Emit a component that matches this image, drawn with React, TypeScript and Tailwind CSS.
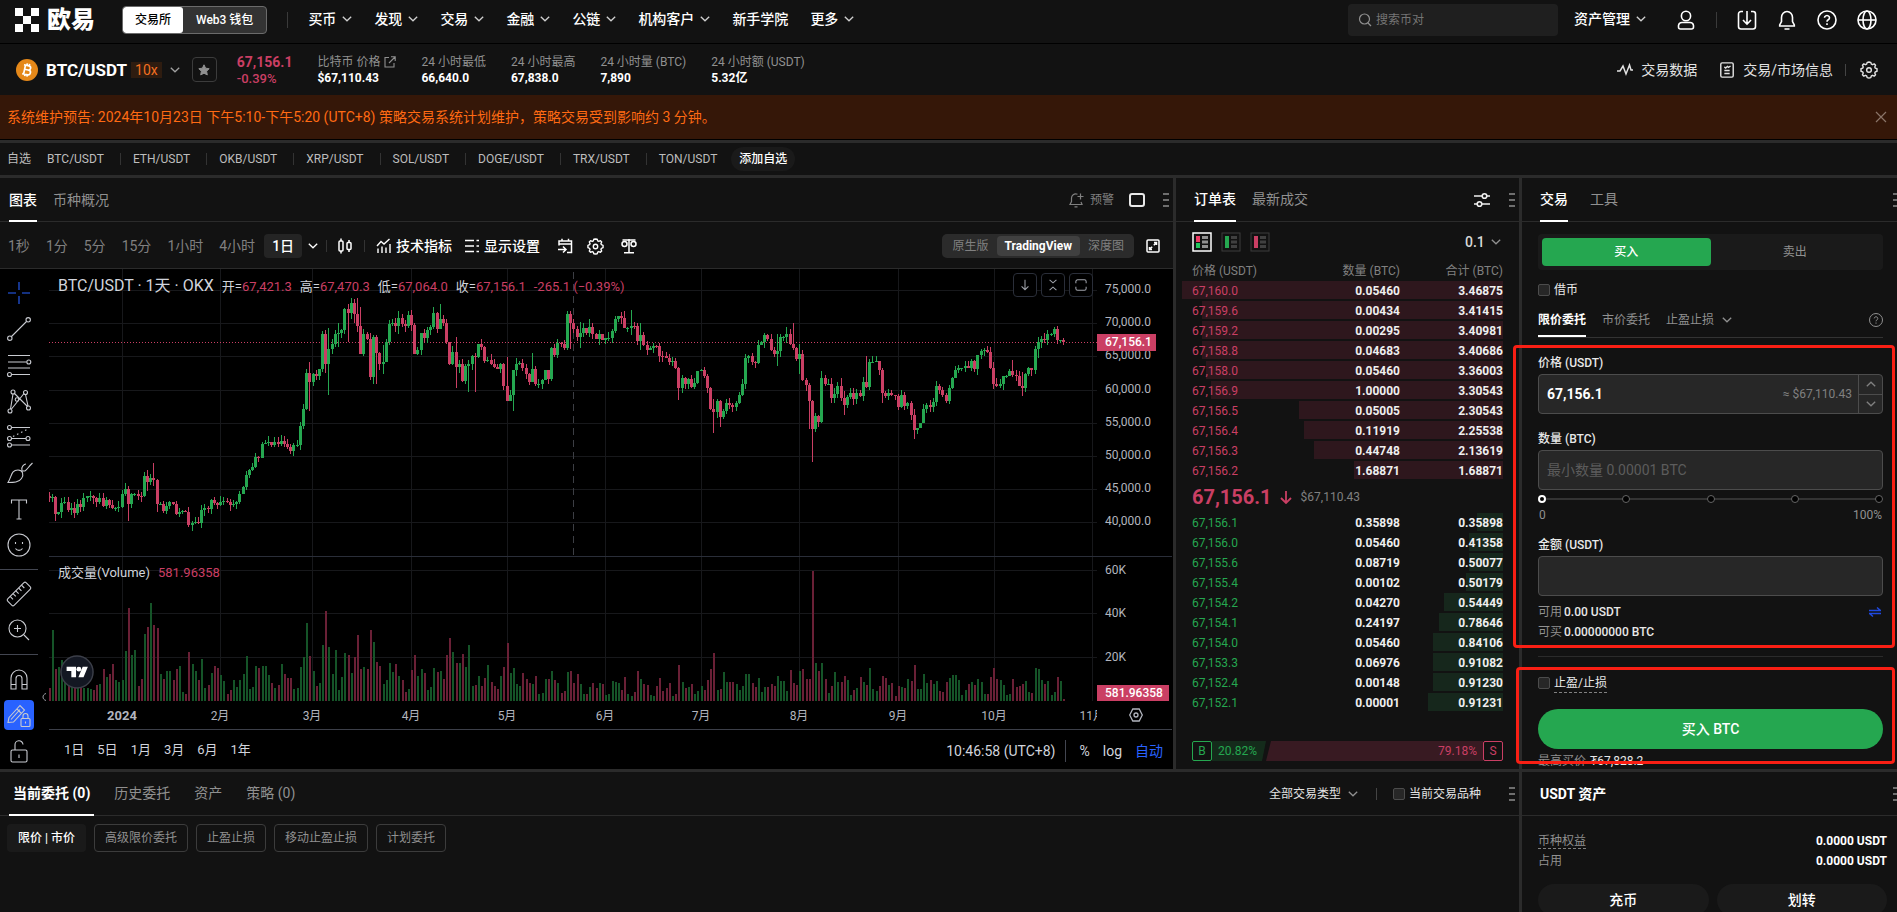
import React from "react";

type Tone = "up" | "down";

const GREEN = "#25a750";
const RED = "#ca3f64";

/* ---------- data ---------- */

const NAV = [
  { label: "买币", menu: true },
  { label: "发现", menu: true },
  { label: "交易", menu: true },
  { label: "金融", menu: true },
  { label: "公链", menu: true },
  { label: "机构客户", menu: true },
  { label: "新手学院", menu: false },
  { label: "更多", menu: true },
];

const FAVORITES = ["BTC/USDT", "ETH/USDT", "OKB/USDT", "XRP/USDT", "SOL/USDT", "DOGE/USDT", "TRX/USDT", "TON/USDT"];

const ASKS: [string, string, string, number][] = [
  ["67,160.0", "0.05460", "3.46875", 321],
  ["67,159.6", "0.00434", "3.41415", 301],
  ["67,159.2", "0.00295", "3.40981", 301],
  ["67,158.8", "0.04683", "3.40686", 301],
  ["67,158.0", "0.05460", "3.36003", 297],
  ["67,156.9", "1.00000", "3.30543", 292],
  ["67,156.5", "0.05005", "2.30543", 204],
  ["67,156.4", "0.11919", "2.25538", 199],
  ["67,156.3", "0.44748", "2.13619", 189],
  ["67,156.2", "1.68871", "1.68871", 149],
];

const BIDS: [string, string, string, number][] = [
  ["67,156.1", "0.35898", "0.35898", 26],
  ["67,156.0", "0.05460", "0.41358", 34],
  ["67,155.6", "0.08719", "0.50077", 34],
  ["67,155.4", "0.00102", "0.50179", 37],
  ["67,154.2", "0.04270", "0.54449", 59],
  ["67,154.1", "0.24197", "0.78646", 64],
  ["67,154.0", "0.05460", "0.84106", 70],
  ["67,153.3", "0.06976", "0.91082", 70],
  ["67,152.4", "0.00148", "0.91230", 70],
  ["67,152.1", "0.00001", "0.91231", 75],
];

/* daily closes in thousands of USDT, from 9 December 2023 to 23 October 2024 */
const CLOSES = [
  43.7, 43.8, 41.2, 41.5, 42.9, 43.0, 41.9, 42.2, 41.4, 42.7, 42.3, 43.7, 43.9, 44.0, 43.7, 43.0, 43.6, 42.5, 43.4, 42.6, 42.1, 42.2, 42.3,
  44.2, 45.0, 42.8, 44.2, 44.2, 44.0, 43.9, 47.0, 46.1, 46.6, 46.3, 42.8, 42.8, 41.7, 42.5, 43.1, 42.8, 41.3, 41.6, 41.7, 41.6, 39.6, 39.9, 40.1, 39.9, 41.8, 42.1, 42.0, 43.3, 42.9, 42.6,
  43.1, 43.2, 43.0, 42.6, 42.7, 43.1, 44.3, 45.3, 47.1, 47.8, 48.3, 49.9, 49.7, 51.8, 51.9, 52.1, 51.7, 52.1, 51.8, 52.3, 51.8, 51.3, 50.7, 51.6, 51.7, 54.5, 57.0, 62.5, 61.2,
  62.4, 62.0, 63.1, 68.3, 63.8, 66.1, 66.9, 68.3, 68.5, 69.0, 72.1, 71.5, 73.1, 71.4, 69.5, 65.3, 68.4, 67.6, 61.9, 67.9, 65.5, 63.8, 64.1, 67.2, 69.9, 70.0, 69.5, 70.8, 69.9, 69.6, 71.3,
  69.7, 65.4, 66.0, 68.5, 67.8, 68.9, 69.4, 71.6, 69.1, 70.6, 70.0, 67.1, 63.9, 65.7, 63.4, 63.8, 61.3, 63.5, 63.8, 65.0, 64.9, 66.8, 66.4, 64.3, 64.5, 63.8, 63.4, 63.1, 63.8, 60.6,
  58.3, 59.1, 62.9, 63.9, 64.0, 63.2, 62.3, 61.2, 63.1, 60.8, 60.8, 61.5, 62.9, 61.6, 66.2, 65.2, 67.0, 66.9, 66.3, 71.4, 70.1, 69.1, 67.9, 68.5, 69.3, 68.5, 69.4, 68.3, 67.6, 68.3, 67.5,
  67.7, 67.8, 68.8, 70.6, 71.1, 70.8, 69.3, 69.3, 69.6, 69.5, 67.3, 68.2, 66.7, 66.0, 66.2, 66.6, 66.5, 65.1, 65.0, 64.8, 64.1, 64.3, 63.2, 60.3, 61.8, 60.8, 61.6, 60.4, 61.0, 62.8,
  62.9, 62.1, 60.2, 57.0, 56.6, 58.3, 55.9, 56.7, 58.0, 57.7, 57.3, 57.9, 59.2, 60.8, 64.7, 65.1, 64.1, 64.0, 66.7, 67.1, 68.2, 67.6, 65.9, 65.4, 65.8, 67.9, 67.9, 68.3, 66.8, 66.2, 64.6,
  65.3, 61.5, 60.7, 58.2, 54.0, 56.0, 55.1, 61.7, 60.9, 60.9, 58.7, 59.3, 60.6, 58.7, 57.6, 58.9, 59.5, 58.5, 59.5, 59.0, 61.2, 60.4, 64.1, 64.2, 64.3, 62.9, 59.5, 59.0, 59.4, 59.1, 59.0,
  57.3, 59.1, 57.5, 58.0, 56.2, 53.9, 54.2, 54.9, 57.0, 57.6, 57.3, 58.1, 60.5, 60.0, 59.2, 58.2, 60.3, 61.8, 62.9, 63.2, 63.3, 63.6, 63.3, 64.3, 63.1, 65.2, 65.8, 65.9, 65.6, 63.3,
  60.8, 60.6, 60.8, 62.1, 62.1, 62.8, 62.2, 62.1, 60.6, 60.3, 62.4, 63.2, 62.9, 66.1, 67.1, 67.6, 67.4, 68.4, 68.4, 69.1, 67.4, 67.4, 67.156,
];

/* wicks that reach far outside the candle body: day index -> [low, high] */
const WICKS: Record<number, [number, number]> = {
  2: [40.2, 43.9], 8: [40.6, 43.0], 24: [44.0, 45.9], 25: [40.2, 45.5], 31: [44.7, 47.9], 33: [45.5, 48.9], 34: [41.5, 46.5], 45: [38.6, 40.2],
  82: [56.7, 64.1], 87: [62.5, 69.0], 88: [59.1, 69.2], 91: [66.4, 70.1], 94: [67.2, 72.9], 96: [70.0, 73.6], 97: [68.6, 73.8], 98: [65.6, 72.4],
  102: [60.8, 68.2], 103: [60.9, 68.2], 105: [62.3, 66.7], 110: [68.3, 71.8], 123: [69.2, 72.9], 128: [60.2, 67.9], 132: [59.7, 64.5], 134: [59.7, 65.5],
  144: [60.0, 64.9], 146: [56.7, 59.5], 152: [61.6, 65.5], 164: [66.1, 71.9], 167: [66.3, 70.2], 170: [67.9, 70.7], 181: [69.2, 71.9],
  183: [68.2, 72.0], 186: [66.0, 70.0], 198: [58.4, 63.4], 209: [53.4, 58.6], 211: [54.4, 58.4], 229: [63.6, 68.4], 232: [67.0, 69.4],
  234: [66.0, 70.0], 236: [62.4, 66.8], 239: [54.0, 61.0], 240: [49.0, 58.4], 243: [54.9, 62.8], 246: [58.0, 61.8], 249: [58.2, 61.8],
  250: [56.2, 59.8], 257: [60.2, 65.0], 259: [64.0, 65.1], 262: [58.0, 63.2], 272: [52.6, 57.0], 297: [60.1, 64.2], 300: [59.9, 61.3],
  303: [61.9, 64.4], 306: [59.0, 62.6], 310: [62.4, 66.6], 311: [64.8, 67.9], 317: [66.9, 69.5],
};

/* daily volume, bar heights in tenths of a thousand BTC */
const VOLUMES = [
  58, 326, 147, 155, 188, 150, 90, 80, 75, 70, 64, 60, 58, 55, 50, 73, 78, 147, 110, 124, 170, 96, 87, 96, 230, 427, 211, 234, 69, 101, 307, 340, 450, 349, 335, 124, 101, 138, 138, 96, 147, 160, 41, 32,
  225, 170, 138, 96, 193, 60, 73, 128, 160, 151, 119, 92, 32, 50, 96, 64, 96, 124, 206, 55, 64, 160, 151, 160, 160, 119, 83, 60, 73, 170, 124, 105, 105, 55, 60, 156, 202, 358, 206, 138, 69, 83, 257,
  413, 248, 124, 234, 50, 110, 220, 211, 128, 202, 303, 147, 156, 147, 326, 271, 179, 160, 78, 96, 174, 133, 170, 115, 96, 41, 55, 142, 211, 115, 147, 128, 50, 64, 151, 133, 138, 101, 211, 289, 225,
  174, 174, 216, 156, 257, 69, 73, 115, 69, 105, 165, 87, 69, 55, 115, 156, 266, 128, 151, 78, 69, 128, 101, 83, 78, 115, 32, 37, 101, 101, 138, 96, 83, 37, 46, 133, 138, 83, 124, 78, 32, 32, 64, 83,
  60, 83, 78, 28, 32, 92, 87, 83, 50, 110, 32, 23, 41, 138, 101, 78, 73, 28, 23, 69, 105, 46, 60, 83, 23, 32, 165, 87, 60, 64, 78, 32, 46, 69, 50, 96, 147, 220, 50, 55, 133, 87, 87, 87, 78, 50, 69,
  124, 124, 83, 64, 105, 41, 64, 64, 78, 69, 115, 92, 92, 46, 142, 83, 73, 138, 147, 101, 101, 596, 174, 138, 174, 101, 37, 69, 133, 87, 87, 115, 96, 28, 50, 60, 110, 87, 73, 151, 55, 46, 69, 115,
  105, 73, 83, 23, 69, 64, 60, 101, 92, 165, 55, 55, 124, 83, 96, 78, 92, 46, 41, 87, 105, 119, 119, 96, 28, 50, 78, 87, 73, 101, 87, 32, 32, 110, 151, 101, 96, 73, 28, 32, 101, 64, 69, 78, 92, 41,
  37, 151, 147, 96, 78, 92, 28, 41, 110, 92, 9,
];

const MONTHS: [string, number][] = [
  ["2024", 73], ["2月", 171], ["3月", 263], ["4月", 362], ["5月", 458], ["6月", 556], ["7月", 652], ["8月", 750], ["9月", 849], ["10月", 945],
];

const PLOT_W = 1048;
const PRICE_H = 287;
const VOLUME_H = 144;
const priceY = (p: number) => 21 + (75 - p) * 6.634;
const dayX = (i: number) => -0.5 + i * 3.181;
const noise = (n: number) => {
  const v = Math.sin(n * 127.1 + 11.7) * 43758.5453;
  return v - Math.floor(v);
};

/* ---------- small pieces ---------- */

function Chevron({ className = "", up = false }: { className?: string; up?: boolean }) {
  return (
    <svg viewBox="0 0 10 6" className={`h-[6px] w-[10px] shrink-0 ${className}`} fill="none" stroke="currentColor" strokeWidth="1.3" aria-hidden="true">
      <path d={up ? "M0.8 5.2 5 1.2l4.2 4" : "M0.8 0.8 5 4.8l4.2-4"} />
    </svg>
  );
}

function Icon({ children, className = "h-5 w-5", box = 20, width = 1.6 }: { children: React.ReactNode; className?: string; box?: number; width?: number }) {
  return (
    <svg viewBox={`0 0 ${box} ${box}`} className={`shrink-0 ${className}`} fill="none" stroke="currentColor" strokeWidth={width} aria-hidden="true">
      {children}
    </svg>
  );
}

const GEAR =
  "M10 1.2l2 .3.6 2 1.3.6 1.9-.9 1.5 1.5-.9 1.9.6 1.3 1.9.7v2.8l-1.9.7-.6 1.3.9 1.9-1.5 1.5-1.9-.9-1.3.6-.6 2-2 .3-2-.3-.6-2-1.3-.6-1.9.9-1.5-1.5.9-1.9-.6-1.3-1.9-.7V8.600l1.900-.7.6-1.300-.9-1.900 1.500-1.500 1.900.9 1.300-.6.6-2z";

function Gear({ className }: { className?: string }) {
  return (
    <Icon className={className} width={1.6}>
      <path d={GEAR} strokeLinejoin="round" />
      <circle cx="10" cy="10" r="2.6" />
    </Icon>
  );
}

function DragHandle({ className = "" }: { className?: string }) {
  return (
    <span className={`flex shrink-0 flex-col gap-1 ${className}`} aria-hidden="true">
      <i className="h-0.5 w-1.5 bg-[#6e6e6e]" />
      <i className="h-0.5 w-1.5 bg-[#6e6e6e]" />
      <i className="h-0.5 w-1.5 bg-[#6e6e6e]" />
    </span>
  );
}

function Tab({ children, active = false, className = "" }: { children: React.ReactNode; active?: boolean; className?: string }) {
  return (
    <button
      type="button"
      className={`-mb-px border-b-2 text-sm whitespace-nowrap ${active ? "border-white text-white" : "border-transparent text-[#909090]"} ${className}`}
    >
      {children}
    </button>
  );
}

const checkboxClass = "h-3 w-3 shrink-0 appearance-none rounded-[2px] border border-[#4c4c4c] bg-[#272727] checked:bg-white";

/* ---------- header ---------- */

function Header() {
  return (
    <header className="flex h-11 shrink-0 items-center border-b border-black bg-[#121212] pb-3 text-sm font-medium text-white">
      <a href="#home" className="ml-[15px] flex items-center gap-2 pt-2" aria-label="欧易">
        <svg viewBox="0 0 24 24" className="h-6 w-6" fill="#fff" aria-hidden="true">
          <path d="M0 0h8v8H0zM16 0h8v8h-8zM8 8h8v8H8zM0 16h8v8H0zM16 16h8v8h-8z" />
        </svg>
        <span className="text-2xl leading-6 font-black">欧易</span>
      </a>
      <div className="mt-2 ml-[27px] flex h-7 overflow-hidden rounded-[4px] border border-[#6b6b6b] bg-[#333] text-xs">
        <button type="button" className="rounded-[3px] bg-white px-3 text-black">交易所</button>
        <button type="button" className="px-[13px] text-white">Web3 钱包</button>
      </div>
      <span className="mt-2 ml-5 h-4 w-px bg-[#3a3a3a]" />
      <nav className="mt-1.5 ml-5 flex items-center gap-[22px] whitespace-nowrap">
        {NAV.map((n) => (
          <a key={n.label} href="#nav" className="flex items-center gap-1.5">
            {n.label}
            {n.menu && <Chevron className="text-[#d0d0d0]" />}
          </a>
        ))}
      </nav>
      <div className="mt-2 ml-auto flex h-8 w-[210px] items-center gap-1 rounded-[4px] bg-[#1f1f1f] px-2.5 text-xs font-normal">
        <Icon className="h-3.5 w-3.5 text-[#909090]" box={14} width={1.2}>
          <circle cx="6.500" cy="6" r="5" />
          <path d="m10 10 3 3" />
        </Icon>
        <input aria-label="搜索币对" placeholder="搜索币对" className="w-full bg-transparent outline-none placeholder:text-[#757575]" />
      </div>
      <a href="#assets" className="mt-1.5 ml-4 flex items-center gap-1.5 whitespace-nowrap">
        资产管理 <Chevron className="text-[#d0d0d0]" />
      </a>
      <div className="mt-2 mr-5 ml-[30px] flex items-center gap-5">
        <button type="button" aria-label="用户" className="w-5">
          <Icon>
            <ellipse cx="10" cy="6" rx="4.600" ry="4.800" />
            <path d="M2.500 17v-1.500a3.500 3.500 0 0 1 3.500-3h8a3.500 3.500 0 0 1 3.500 3V17a2 2 0 0 1-2 2h-11a2 2 0 0 1-2-2z" />
          </Icon>
        </button>
        <span className="h-4 w-px bg-[#3a3a3a]" />
        <button type="button" aria-label="下载">
          <Icon>
            <path d="M6 1.500H4A2.500 2.500 0 0 0 1.500 4v12.500A2.500 2.500 0 0 0 4 19h12a2.500 2.500 0 0 0 2.500-2.500V4A2.500 2.500 0 0 0 16 1.500h-2M10 1v13M6 10l4 4.200 4-4.200" />
          </Icon>
        </button>
        <button type="button" aria-label="通知">
          <Icon>
            <path d="M4.500 7.500a5.500 6 0 0 1 11 0v4l1.800 3.500v1H2.700v-1l1.800-3.500zM7.500 19h5" />
          </Icon>
        </button>
        <button type="button" aria-label="帮助">
          <Icon>
            <circle cx="10" cy="10" r="9" />
            <path d="M7.500 7.800a2.500 2.300 0 1 1 3.800 2c-.9.500-1.300 1-1.300 1.900M10 13.200v1.800" />
          </Icon>
        </button>
        <button type="button" aria-label="语言">
          <Icon>
            <circle cx="10" cy="10" r="9" />
            <ellipse cx="10" cy="10" rx="4" ry="9" />
            <path d="M1 10h18" />
          </Icon>
        </button>
      </div>
    </header>
  );
}

function Stat({ label, value, link = false }: { label: string; value: string; link?: boolean }) {
  return (
    <div className="whitespace-nowrap">
      <div className="flex items-center gap-1 text-[#909090]">
        {label}
        {link && (
          <Icon className="h-3 w-3" box={12} width={1.1}>
            <path d="M5 1.500H1v9.500h9V7M7 .8h4.200V5M11 1 5 7" />
          </Icon>
        )}
      </div>
      <div className="font-bold text-white">{value}</div>
    </div>
  );
}

function Ticker() {
  return (
    <section className="flex h-[51px] shrink-0 items-center bg-[#121212] text-xs leading-4">
      <svg viewBox="0 0 22 22" className="ml-4 h-[22px] w-[22px] shrink-0" aria-hidden="true">
        <circle cx="11" cy="11" r="11" fill="#f7931a" fillOpacity=".92" />
        <g transform="rotate(12 11 11)" fill="none" stroke="#fff" strokeWidth="1.700">
          <path d="M8.500 6.500v9M7 6.500h5a2.100 2.100 0 0 1 0 4.300H8.500M12 10.800h.6a2.300 2.300 0 0 1 0 4.700H7M10 4.500v2M12.300 4.500v2M10 15.500v2M12.300 15.500v2" />
        </g>
      </svg>
      <h1 className="ml-2 text-[17px] font-bold text-white">BTC/USDT</h1>
      <span className="ml-1 bg-[#2e1c10] px-1 text-sm leading-4 text-[#f37021]">10x</span>
      <Chevron className="ml-2 text-[#a0a0a0]" />
      <button type="button" aria-label="收藏" className="ml-3 flex h-[25px] w-[25px] items-center justify-center rounded-[4px] border border-[#3c3c3c]">
        <svg viewBox="0 0 12 12" className="h-3 w-3" fill="#909090" stroke="#909090" strokeLinejoin="round" aria-hidden="true">
          <path d="M6 .8l1.600 3.400 3.600.5-2.600 2.500.7 3.700L6 9.200l-3.300 1.700.7-3.700L.8 4.700l3.600-.5z" />
        </svg>
      </button>
      <div className="ml-5 text-[#ca3f64]">
        <div className="text-sm leading-[18px] font-bold">67,156.1</div>
        <div className="text-[13px] leading-4 font-medium">-0.39%</div>
      </div>
      <div className="ml-[25px] flex gap-[25px] pt-px">
        <Stat label="比特币 价格" value="$67,110.43" link />
        <Stat label="24 小时最低" value="66,640.0" />
        <Stat label="24 小时最高" value="67,838.0" />
        <Stat label="24 小时量 (BTC)" value="7,890" />
        <Stat label="24 小时额 (USDT)" value="5.32亿" />
      </div>
      <div className="mr-[19px] ml-auto flex items-center text-sm whitespace-nowrap text-[#e2e2e2]">
        <a href="#data" className="flex items-center gap-2">
          <Icon className="h-4 w-4" box={16} width={1.500}>
            <path d="M0 9h3l3-5 3 8 3.500-9L14 8h2" />
          </Icon>
          交易数据
        </a>
        <a href="#info" className="ml-[22px] flex items-center gap-2">
          <Icon className="h-[18px] w-4" box={18} width={1.600}>
            <rect x="2" y="1" width="14" height="16" rx="1.500" />
            <path d="M6 9.500h6M6 13h6M6 5.500l1.500 1.200L9.500 5l1.200 1L13 4.500" />
          </Icon>
          交易/市场信息
        </a>
        <span className="ml-3 h-3 w-px bg-[#444]" />
        <button type="button" aria-label="设置" className="ml-3.5">
          <Gear className="h-[18px] w-[18px]" />
        </button>
      </div>
    </section>
  );
}

/* ---------- chart ---------- */

const SIDE_TOOLS: React.ReactNode[][] = [
  [
    <path key="c" stroke="#2962ff" d="M3 14h8M17 14h8M14 3v8M14 17v8" />,
    <g key="t"><path d="M6.500 21.500 21.500 6.500" /><circle cx="4.800" cy="23.200" r="2.200" /><circle cx="23.200" cy="4.800" r="2.200" /></g>,
    <g key="l"><path d="M3 4.500h22M3 11h18.500M3 17h22M7 23.500h18" /><circle cx="23.800" cy="11" r="2" /><circle cx="4.500" cy="23.500" r="2" /></g>,
    <g key="x"><path d="M5.500 22 8 7M9.500 6.500l13 13M20.500 7.500 23 19M19 6.500 6.500 22" /><circle cx="8" cy="5" r="2" /><circle cx="20.500" cy="5.500" r="2" /><circle cx="12" cy="12.500" r="1.800" /><circle cx="5" cy="24" r="2" /><circle cx="23.500" cy="21" r="2" /></g>,
    <g key="f"><path d="M6.500 4.500H25M6.500 15.500H21M6.500 22H25" /><path d="M8 13.500 23 6" strokeDasharray="1.500 3" /><circle cx="4.500" cy="4.500" r="2" /><circle cx="4.500" cy="15.500" r="2" /><circle cx="23" cy="15.500" r="2" /><circle cx="4.500" cy="22" r="2" /></g>,
    <path key="b" d="M3 23.500C7 17 6 11 13 11c5 0 6 5 3.500 8.500-2.500 4-8 4-13.500 4zM17 11c-1-3 2-6 4-6M16.500 11.500c5 2 5-2 11-7.500" />,
    <path key="T" d="M6.500 8.500V5h15v3.500M14 5v19M11.500 24h5" />,
    <g key="s"><circle cx="14" cy="14" r="11" /><path d="M10.500 17.500c1.500 2.500 5.500 2.500 7 0M10.500 11v2M17.500 11v2" /></g>,
  ],
  [
    <g key="r" transform="rotate(-45 14 14)"><rect x="1" y="9.500" width="26" height="9" rx="1.500" /><path d="M6 9.500v4M10 9.500v4M14 9.500v4M18 9.500v4M22 9.500v4" /></g>,
    <g key="z"><circle cx="12.500" cy="12.500" r="8.500" /><path d="m19 19 5 5M12.500 9v7M9 12.500h7" /></g>,
  ],
  [
    <path key="m" d="M6 24V13a8 8 0 0 1 16 0v11h-5V13.500a3 3 0 0 0-6 0V24zM6 19.500h5M17 19.500h5" />,
    <g key="p"><path d="m4 16.500 11-12 4.500 4.500L8.500 21l-5.500.5zM12 8l4.500 4.500M6 18.500l9-10" /><rect x="16" y="17.500" width="9" height="8" rx="1" fill="#2962ff" /><path d="M18 17.500v-2.500a2.500 2.500 0 0 1 5 0v2.500M20.500 20.500v2" /></g>,
    <g key="k"><rect x="6" y="13" width="16" height="12" rx="1.500" /><path d="M10 13V8a4 4 0 0 1 8-.5M14 17.500v3.500" /></g>,
  ],
];

function SideTools() {
  return (
    <div className="flex w-[38px] shrink-0 flex-col pt-1.5 text-[#c9cbd1]">
      {SIDE_TOOLS.map((group, g) => (
        <div key={g} className={`flex flex-col items-center ${g > 0 ? "mt-1.5 border-t border-[#434651] pt-1.5" : ""}`}>
          {group.map((tool, i) => (
            <button key={i} type="button" aria-label={`绘图工具 ${g + 1}-${i + 1}`} className="flex h-9 w-9 items-center justify-center">
              <span className={`flex h-[30px] w-[30px] items-center justify-center rounded-[4px] ${g === 2 && i === 1 ? "bg-[#2962ff]" : ""}`}>
                <Icon box={28} width={1.1} className="h-7 w-7">{tool}</Icon>
              </span>
            </button>
          ))}
        </div>
      ))}
    </div>
  );
}

function MonthGrid({ height }: { height: number }) {
  return (
    <g stroke="#17181b">
      {[...MONTHS.map((m) => m[1]), 1043].map((x) => (
        <path key={x} d={`M${x + 0.5} 0V${height}`} />
      ))}
    </g>
  );
}

function PricePlot() {
  return (
    <svg viewBox={`0 0 ${PLOT_W} ${PRICE_H}`} preserveAspectRatio="none" className="absolute inset-0 h-full w-full" shapeRendering="crispEdges" role="img" aria-label="BTC/USDT 日线图">
      <MonthGrid height={PRICE_H} />
      {[75, 70, 65, 60, 55, 50, 45, 40].map((p) => (
        <path key={p} d={`M0 ${Math.round(priceY(p)) + 0.5}H${PLOT_W}`} stroke="#17181b" />
      ))}
      <path d={`M524.500 3V${PRICE_H}`} stroke="#3c3e44" strokeDasharray="7 5" />
      <path d={`M0 73.500H${PLOT_W}`} stroke={RED} strokeDasharray="1 2" />
      {CLOSES.map((close, i) => {
        const open = i === 0 ? 43.9 : CLOSES[i - 1];
        const top = Math.max(open, close);
        const bottom = Math.min(open, close);
        const wick = WICKS[i];
        const low = wick ? Math.min(wick[0], bottom) : bottom - noise(i) * 0.9;
        const high = wick ? Math.max(wick[1], top) : top + noise(i + 500) * 0.9;
        const x = Math.round(dayX(i));
        const yTop = Math.round(priceY(top));
        const bodyHeight = Math.max(1, Math.round(priceY(bottom)) - yTop);
        return (
          <g key={i} fill={close >= open ? GREEN : RED}>
            <rect x={x} y={priceY(high)} width="1" height={priceY(low) - priceY(high)} />
            <rect x={x - 1} y={yTop} width="3" height={bodyHeight} />
          </g>
        );
      })}
    </svg>
  );
}

function VolumePlot() {
  const step = (CLOSES.length - 1) / (VOLUMES.length - 1);
  return (
    <svg viewBox={`0 0 ${PLOT_W} ${VOLUME_H}`} preserveAspectRatio="none" className="absolute inset-0 h-full w-full" shapeRendering="crispEdges" role="img" aria-label="成交量">
      <MonthGrid height={VOLUME_H} />
      {[13.5, 56.5, 100.5].map((y) => (
        <path key={y} d={`M0 ${y}H${PLOT_W}`} stroke="#17181b" />
      ))}
      {VOLUMES.map((v, i) => {
        const day = Math.round(i * step);
        const up = day > 0 && CLOSES[day] >= CLOSES[day - 1];
        const h = Math.max(2, v * 0.218);
        return <rect key={i} x={Math.round(dayX(i * step))} y={VOLUME_H - h} width="2" height={h} fill={up ? "#155428" : "#6a2036"} />;
      })}
    </svg>
  );
}

function AxisLabel({ top, children }: { top: number; children: React.ReactNode }) {
  return (
    <span className="absolute left-2 -translate-y-1/2" style={{ top }}>
      {children}
    </span>
  );
}

function ChartArea() {
  return (
    <div className="flex flex-1 bg-black">
      <SideTools />
      <div className="flex w-[11px] items-end pb-[68px] text-[#9a9ca3]">
        <svg viewBox="0 0 4 8" className="ml-1 h-2 w-1" fill="none" stroke="currentColor" aria-hidden="true"><path d="M4 .5C0 1.500 0 6.500 4 7.500" /></svg>
      </div>
      <div className="flex min-w-0 flex-1 flex-col pr-px text-xs text-[#b2b5be]">
        <div className="flex h-[288px] border-b border-[#2a2e39]">
          <div className="relative min-w-0 flex-1">
            <PricePlot />
            <div className="absolute top-[7px] left-[9px] flex items-baseline gap-2 text-[13px] leading-5 whitespace-nowrap text-[#d1d4dc]">
              <span className="text-base leading-5">BTC/USDT · 1天 · OKX</span>
              {[["开", "67,421.3"], ["高", "67,470.3"], ["低", "67,064.0"], ["收", "67,156.1"]].map(([k, v]) => (
                <span key={k}>{k}=<span className="text-[#ca3f64]">{v}</span></span>
              ))}
              <span className="text-[#ca3f64]">-265.1 (−0.39%)</span>
            </div>
            <div className="absolute top-1 right-1 flex gap-1 text-[#a0a3ab]">
              {["M7 1v11M3 8.500 7 12.500l4-4", "M3 1l4 3.500L11 1M3 13l4-3.500 4 3.500", "M1 5V3a2 2 0 0 1 2-2h8a2 2 0 0 1 2 2v2M1 9v2a2 2 0 0 0 2 2h8a2 2 0 0 0 2-2V9"].map((d) => (
                <button key={d} type="button" aria-label="窗格操作" className="flex h-6 w-6 items-center justify-center rounded-[4px] border border-[#2a2e39] bg-black">
                  <Icon box={14} width={1.2} className="h-3 w-3"><path d={d} /></Icon>
                </button>
              ))}
            </div>
          </div>
          <div className="relative w-[75px] leading-4">
            {[75, 70, 65, 60, 55, 50, 45, 40].map((p) => (
              <AxisLabel key={p} top={Math.round(priceY(p)) - 1}>{p},000.0</AxisLabel>
            ))}
            <span className="absolute top-[65px] left-0 bg-[#ca3f64] py-px pr-1 pl-2 leading-[15px] font-medium text-white">67,156.1</span>
          </div>
        </div>
        <div className="flex h-36">
          <div className="relative min-w-0 flex-1">
            <VolumePlot />
            <div className="absolute top-[7px] left-[9px] flex gap-2 text-[13px] leading-[18px] text-[#d1d4dc]">
              成交量(Volume) <span className="text-[#ca3f64]">581.96358</span>
            </div>
            <svg viewBox="0 0 36 36" className="absolute bottom-3 left-[11px] h-[34px] w-[34px]" aria-hidden="true">
              <circle cx="18" cy="18" r="17" fill="#131722" stroke="#3c3f49" strokeWidth="1.500" />
              <path fill="#fff" d="M7 12.500h10v11h-5v-6.500H7zM24 12.500h5.500l-4.600 11h-5.400z" />
              <circle cx="20" cy="15" r="2.600" fill="#fff" />
            </svg>
          </div>
          <div className="relative w-[75px] leading-4">
            <AxisLabel top={13}>60K</AxisLabel>
            <AxisLabel top={56}>40K</AxisLabel>
            <AxisLabel top={100}>20K</AxisLabel>
            <span className="absolute bottom-0 left-0 bg-[#ca3f64] pr-1.5 pl-2 leading-4 font-medium text-white">581.96358</span>
          </div>
        </div>
        <div className="flex h-7 leading-[30px]">
          <div className="relative min-w-0 flex-1 overflow-hidden">
            {MONTHS.map(([label, x]) => (
              <span key={label} className={`absolute -translate-x-1/2 whitespace-nowrap ${label === "2024" ? "text-[13px] font-bold" : ""}`} style={{ left: `${(x / PLOT_W) * 100}%` }}>
                {label}
              </span>
            ))}
            <span className="absolute -right-2 whitespace-nowrap">11月</span>
          </div>
          <div className="flex w-[75px] items-center pl-8">
            <Icon box={14} width={1.300} className="h-3.5 w-3.5">
              <path d="M3.800 1h6.400L13.300 7l-3.100 6H3.800L.7 7z" /><circle cx="7" cy="7" r="2" />
            </Icon>
          </div>
        </div>
        <div className="flex flex-1 items-center border-t border-[#3c3f49] pt-0.5 pr-[9px] pl-[15px] text-sm text-[#d1d4dc]">
          <div className="flex gap-[13px] text-[13px]">
            {["1日", "5日", "1月", "3月", "6月", "1年"].map((r) => <button key={r} type="button">{r}</button>)}
          </div>
          <span className="ml-auto">10:46:58 (UTC+8)</span>
          <span className="mr-[13px] ml-2.5 h-[22px] w-px bg-[#434651]" />
          <div className="flex gap-[13px]">
            <button type="button">%</button>
            <button type="button">log</button>
            <button type="button" className="text-[#2962ff]">自动</button>
          </div>
        </div>
      </div>
    </div>
  );
}

function ChartToolbar() {
  return (
    <div className="flex h-[47px] items-center border-b border-[#2b2b2b] pt-0.5 text-sm whitespace-nowrap text-[#808080]">
      <div className="ml-2 flex items-center gap-4">
        {["1秒", "1分", "5分", "15分", "1小时", "4小时"].map((t) => <button key={t} type="button">{t}</button>)}
      </div>
      <button type="button" className="ml-[9px] h-6 rounded-[4px] bg-[#242424] px-2 font-medium text-white">1日</button>
      <button type="button" aria-label="更多周期" className="ml-1.5 text-white"><Chevron /></button>
      <span className="ml-2 h-3 w-px bg-[#333]" />
      <div className="ml-2.5 flex items-center font-medium text-white">
        <button type="button" aria-label="K线样式">
          <Icon box={16} width={1.500} className="h-4 w-4"><rect x="2" y="3" width="4" height="10" rx="1" /><path d="M4 .5V3M4 13v2.500" /><rect x="10" y="4.500" width="4" height="7" rx="1" /><path d="M12 2v2.500M12 11.500V14" /></Icon>
        </button>
        <span className="mx-[11px] h-3 w-px bg-[#333]" />
        <button type="button" className="flex items-center gap-1">
          <Icon box={16} width={1.400} className="h-4 w-4"><path d="M1 8l4-4.500 3 2.500L13.500 1M2 10.500V15M6 8.500V15M10 9.500V15M14 6v9" /></Icon>
          技术指标
        </button>
        <button type="button" className="ml-3 flex items-center gap-1">
          <Icon box={16} width={1.400} className="h-4 w-4"><path d="M1 2.500h9M1 8h9M1 13.500h9M12.500 2.500H15M12.500 8H15M12.500 13.500H15" /></Icon>
          显示设置
        </button>
        <button type="button" aria-label="日历" className="ml-[17px]">
          <Icon box={16} width={1.500} className="h-4 w-4"><path d="M2 7.500V3h12.500v11.500H10M1.500 6H14.500M5 .8V3M11.500 .8V3M1 11.500h7.500M6 8.500l3 3-3 3" /></Icon>
        </button>
        <button type="button" aria-label="图表设置" className="ml-3.5"><Gear className="h-[17px] w-[17px]" /></button>
        <button type="button" aria-label="对比" className="ml-[17px]">
          <Icon box={16} width={1.500} className="h-4 w-4"><path d="M1.500 2h13M8 1v13M3 14.800h10" /><circle cx="3.500" cy="6" r="2.500" /><circle cx="12.500" cy="6" r="2.500" /></Icon>
        </button>
      </div>
      <div className="ml-auto flex h-6 items-center rounded-[5px] bg-[#2b2b2b] px-0.5 text-xs">
        <button type="button" className="px-2">原生版</button>
        <button type="button" className="h-5 rounded-[4px] bg-[#404040] px-2 font-bold text-white">TradingView</button>
        <button type="button" className="px-2">深度图</button>
      </div>
      <button type="button" aria-label="全屏" className="mr-[13px] ml-3 text-white">
        <Icon box={14} width={1.500} className="h-3.5 w-3.5"><rect x="1" y="1" width="12" height="12" rx="1" /><path d="M8 3.500h2.500V6M6 10.500H3.500V8M10 4 7.800 6.200M4 10l2.200-2.200" /></Icon>
      </button>
    </div>
  );
}

function ChartPanel() {
  return (
    <section className="flex min-w-0 flex-1 flex-col bg-[#121212]">
      <div className="flex h-11 border-b border-[#2b2b2b] pl-[9px]">
        <Tab active className="pt-0.5 font-medium">图表</Tab>
        <Tab className="ml-4 pt-0.5">币种概况</Tab>
        <div className="ml-auto flex items-center pr-1 text-xs text-[#808080]">
          <Icon box={16} width={1.200} className="h-4 w-4"><path d="M9.500 2.200C6 1 3.500 3.500 3.500 6v3.500L2 12.500h12l-1-2.500M6.500 14.800h3M12.500 1.500v6M9.500 4.500h6" /></Icon>
          <button type="button" className="ml-1.5">预警</button>
          <button type="button" aria-label="布局" className="mr-[18px] ml-[15px] h-3.5 w-4 rounded-[3px] border-2 border-[#e8e8e8]" />
          <DragHandle />
        </div>
      </div>
      <ChartToolbar />
      <ChartArea />
    </section>
  );
}

/* ---------- order book ---------- */

function BookRows({ rows, tone }: { rows: [string, string, string, number][]; tone: Tone }) {
  return (
    <>
      {rows.map(([price, amount, total, depth]) => (
        <tr key={price} className="relative h-5">
          <td className={tone === "up" ? "text-[#25a750]" : "text-[#ca3f64]"}>
            <span className={`absolute top-0 right-0 h-[18px] ${tone === "up" ? "bg-[#16271c]" : "bg-[#2e171d]"}`} style={{ width: depth }} />
            <span className="relative">{price}</span>
          </td>
          <td className="text-right font-bold text-[#efefef]"><span className="relative">{amount}</span></td>
          <td className="text-right font-bold text-[#efefef]"><span className="relative">{total}</span></td>
        </tr>
      ))}
    </>
  );
}

function BookMode({ label, active, colors }: { label: string; active?: boolean; colors: [string, string] }) {
  return (
    <button type="button" aria-label={label}>
      <svg viewBox="0 0 20 20" className="h-5 w-5" aria-hidden="true">
        <rect x="1" y="1" width="18" height="18" fill="#121212" stroke={active ? "#fff" : "#3c3c3c"} strokeWidth={active ? 1.500 : 1} />
        <path fill={colors[0]} d="M4 4h4v6H4z" />
        <path fill={colors[1]} d={active ? "M4 11h4v5H4z" : "M4 10h4v6H4z"} />
        <path fill={active ? "#909090" : "#404040"} d="M10 4h6v3h-6zM10 8.500h6v3h-6zM10 13h6v3h-6z" />
      </svg>
    </button>
  );
}

function OrderBook() {
  return (
    <section className="flex w-[343px] shrink-0 flex-col bg-[#121212] text-xs">
      <div className="flex h-11 border-b border-[#2b2b2b] pl-[18px]">
        <Tab active className="font-medium">订单表</Tab>
        <Tab className="ml-4">最新成交</Tab>
        <div className="ml-auto flex items-center pr-1">
          <button type="button" aria-label="订单表设置" className="mr-[19px] text-[#efefef]">
            <Icon box={16} width={1.600} className="h-4 w-4"><path d="M0 4h8M13 4h3M0 12h3M8 12h8" /><circle cx="10.500" cy="4" r="2.300" /><circle cx="5.500" cy="12" r="2.300" /></Icon>
          </button>
          <DragHandle />
        </div>
      </div>
      <div className="flex flex-1 flex-col pr-4 pl-4">
        <div className="flex h-[38px] items-center gap-[9px] pt-px">
          <BookMode label="买卖盘" active colors={["#ef3a64", "#22c55e"]} />
          <BookMode label="买盘" colors={["#25a750", "#25a750"]} />
          <BookMode label="卖盘" colors={[RED, RED]} />
          <label className="relative ml-auto flex items-center text-sm font-medium text-[#d8d8d8]">
            <select aria-label="深度精度" className="appearance-none bg-transparent pr-[18px] outline-none"><option>0.1</option></select>
            <Chevron className="pointer-events-none absolute right-0.5 w-2 text-[#909090]" />
          </label>
        </div>
        <table className="w-full table-fixed border-collapse leading-[18px]">
          <colgroup><col /><col /><col className="w-[103px]" /></colgroup>
          <thead className="text-[#808080]">
            <tr className="h-[21px]">
              <th className="text-left font-normal">价格 (USDT)</th>
              <th className="text-right font-normal">数量 (BTC)</th>
              <th className="text-right font-normal">合计 (BTC)</th>
            </tr>
          </thead>
          <tbody>
            <BookRows rows={ASKS} tone="down" />
            <tr className="h-8">
              <td colSpan={3}>
                <span className="flex items-center">
                  <strong className="text-xl leading-6 text-[#ca3f64]">67,156.1</strong>
                  <Icon box={14} width={1.800} className="ml-[7px] h-3.5 w-3.5 text-[#ca3f64]"><path d="M7 1v12M2 8l5 5 5-5" /></Icon>
                  <span className="ml-2 text-[#808080]">$67,110.43</span>
                </span>
              </td>
            </tr>
            <BookRows rows={BIDS} tone="up" />
          </tbody>
        </table>
        <div className="mt-7 mb-2 flex h-5">
          <span className="flex w-5 items-center justify-center rounded-[2px] border border-[#25a750] text-[#25a750]">B</span>
          <span className="w-[54px] bg-[#142b1b] pl-1.5 leading-5 text-[#25a750] [clip-path:polygon(0_0,100%_0,calc(100%-4px)_100%,0_100%)]">20.82%</span>
          <span className="flex-1 bg-[#381a22] pr-1.5 text-right leading-5 text-[#ca3f64] [clip-path:polygon(5px_0,100%_0,100%_100%,0_100%)]">79.18%</span>
          <span className="flex w-5 items-center justify-center rounded-[2px] border border-[#ca3f64] text-[#ca3f64]">S</span>
        </div>
      </div>
    </section>
  );
}

/* ---------- trade form ---------- */

const fieldClass = "h-10 w-full rounded-[4px] border border-[#4c4c4c] bg-[#272727] px-2 outline-none placeholder:text-[#5c5c5c]";

function TradeForm() {
  return (
    <form className="flex flex-col pr-3.5 pl-4 text-xs text-[#e8e8e8]" onSubmit={(e) => e.preventDefault()}>
      <div className="mt-3 grid h-9 grid-cols-2 rounded-[4px] bg-[#1a1a1a] p-1">
        <button type="button" className="rounded-[4px] bg-[#25a750] font-medium text-white">买入</button>
        <button type="button" className="text-[#909090]">卖出</button>
      </div>
      <label className="mt-3 flex h-4 items-center gap-1">
        <input type="checkbox" className={checkboxClass} />借币
      </label>
      <div className="mt-2 flex h-8 items-stretch gap-4 border-b border-[#333] text-[#909090]">
        <button type="button" className="border-b-2 border-white pb-0.5 font-bold text-white">限价委托</button>
        <button type="button" className="pb-1">市价委托</button>
        <button type="button" className="flex items-center gap-2 pb-1">止盈止损 <Chevron className="w-2" /></button>
        <Icon box={14} width={1} className="mt-[7px] ml-auto h-3.5 w-3.5"><circle cx="7" cy="7" r="6.500" /><path d="M5.200 5.400a1.800 1.700 0 1 1 2.800 1.500C7.300 7.300 7 7.600 7 8.300M7 9.500v1.200" /></Icon>
      </div>
      <label htmlFor="price" className="mt-4 leading-[18px] font-medium">价格 (USDT)</label>
      <div className="mt-0.5 flex h-10 rounded-[4px] border border-[#4c4c4c] bg-[#272727]">
        <input id="price" defaultValue="67,156.1" className="min-w-0 flex-1 bg-transparent pl-2 text-sm font-bold text-white outline-none" />
        <span className="self-center pr-1.5 text-[#808080]">≈ $67,110.43</span>
        <span className="flex w-6 flex-col border-l border-[#4c4c4c] text-[#808080]">
          <button type="button" aria-label="增加" className="flex flex-1 items-center justify-center border-b border-[#4c4c4c]"><Chevron up className="w-2" /></button>
          <button type="button" aria-label="减少" className="flex flex-1 items-center justify-center"><Chevron className="w-2" /></button>
        </span>
      </div>
      <label htmlFor="amount" className="mt-4 leading-[18px] font-medium">数量 (BTC)</label>
      <input id="amount" placeholder="最小数量 0.00001 BTC" className={`mt-0.5 text-sm ${fieldClass}`} />
      <div className="relative mt-1 flex h-2.5 items-center justify-between">
        <span className="absolute inset-x-1 h-0.5 bg-[#333]" />
        <span className="relative h-2 w-2 rounded-full border-2 border-white bg-black" />
        {[25, 50, 75, 100].map((s) => <span key={s} className="relative h-2 w-2 rounded-full border border-[#666] bg-black" />)}
        <input type="range" min={0} max={100} defaultValue={0} aria-label="数量百分比" className="absolute inset-0 w-full opacity-0" />
      </div>
      <div className="mt-0.5 flex justify-between px-px leading-[18px] text-[#909090]"><span>0</span><span>100%</span></div>
      <label htmlFor="total" className="mt-3 leading-[18px] font-medium">金额 (USDT)</label>
      <input id="total" className={`mt-0.5 text-sm ${fieldClass}`} />
      <div className="mt-1.5 flex items-center justify-between leading-5">
        <span><span className="mr-0.5 text-[#909090]">可用</span><span className="font-medium">0.00 USDT</span></span>
        <button type="button" aria-label="划转" className="pr-0.5 text-[#1f49e0]">
          <Icon box={12} width={1.500} className="h-3 w-3"><path d="M0 4.500h11.500L8 1.500M12 7.500H.5L4 10.500" /></Icon>
        </button>
      </div>
      <div className="leading-5"><span className="mr-0.5 text-[#909090]">可买</span><span className="font-medium">0.00000000 BTC</span></div>
      <hr className="mt-3.5 border-[#2b2b2b]" />
      <label className="mt-[18px] flex h-4 items-center gap-1">
        <input type="checkbox" className={checkboxClass} />
        <span className="border-b border-dashed border-[#808080] leading-[18px]">止盈/止损</span>
      </label>
      <button type="submit" className="mt-[18px] h-10 shrink-0 rounded-full bg-[#25a750] text-sm font-medium text-white">买入 BTC</button>
      <div className="mt-1 leading-4"><span className="mr-1 text-[#909090]">最高买价</span>₮67,828.2</div>
    </form>
  );
}

function TradePanel() {
  return (
    <section className="relative flex w-[375px] shrink-0 bg-[#121212]">
      <div className="min-w-0 flex-1 overflow-hidden contain-size">
        <div className="flex h-11 border-b border-[#2b2b2b] pl-[18px]">
          <Tab active className="font-medium">交易</Tab>
          <Tab className="ml-[22px]">工具</Tab>
          <DragHandle className="-mr-0.5 ml-auto self-center" />
        </div>
        <TradeForm />
      </div>
      <span className="pointer-events-none absolute top-[167px] right-[2px] -left-[9px] z-10 h-[303px] rounded-[4px] border-3 border-[#f91f14]" />
      <span className="pointer-events-none absolute top-[489px] right-[2px] -left-[6px] z-10 h-[97px] rounded-[4px] border-3 border-[#f91f14]" />
    </section>
  );
}

/* ---------- lower panels ---------- */

function OrdersPanel() {
  return (
    <section className="min-w-0 flex-1 bg-[#121212]">
      <div className="flex h-11 border-b border-[#2b2b2b] pl-[9px]">
        <Tab active className="px-1 font-bold">当前委托 (0)</Tab>
        <Tab className="ml-5">历史委托</Tab>
        <Tab className="ml-6">资产</Tab>
        <Tab className="ml-6">策略 (0)</Tab>
        <div className="ml-auto flex items-center pr-1 text-xs text-[#e2e2e2]">
          <label className="relative flex items-center">
            <select aria-label="交易类型" className="appearance-none bg-transparent pr-[18px] outline-none"><option>全部交易类型</option></select>
            <Chevron className="pointer-events-none absolute right-0.5 w-2 text-[#909090]" />
          </label>
          <span className="mx-4 h-3 w-px bg-[#444]" />
          <label className="mr-7 flex items-center gap-1"><input type="checkbox" className={checkboxClass} />当前交易品种</label>
          <DragHandle />
        </div>
      </div>
      <div className="mt-2 ml-[7px] flex gap-2 text-xs">
        <button type="button" className="h-7 rounded-[4px] bg-[#1a1a1a] px-[11px] font-medium text-white">限价 | 市价</button>
        {["高级限价委托", "止盈止损", "移动止盈止损", "计划委托"].map((t) => (
          <button key={t} type="button" className="h-7 rounded-[4px] border border-[#3c3c3c] px-2.5 text-[#909090]">{t}</button>
        ))}
      </div>
    </section>
  );
}

function AssetsPanel() {
  return (
    <section className="w-[375px] shrink-0 bg-[#121212] text-xs">
      <div className="flex h-11 items-center justify-between border-b border-[#2b2b2b] pl-[18px]">
        <h2 className="text-sm font-bold text-white">USDT 资产</h2>
        <DragHandle className="-mr-0.5" />
      </div>
      <dl className="mt-[15px] mr-2.5 ml-4 leading-5 text-[#909090]">
        <div className="flex justify-between">
          <dt><span className="border-b border-dashed border-[#808080]">币种权益</span></dt>
          <dd className="font-bold text-white">0.0000 USDT</dd>
        </div>
        <div className="flex justify-between">
          <dt>占用</dt>
          <dd className="font-bold text-white">0.0000 USDT</dd>
        </div>
      </dl>
      <div className="mt-[13px] mr-2.5 ml-4 grid grid-cols-2 gap-2 text-sm font-medium text-white">
        <button type="button" className="h-8 rounded-full bg-[#1a1a1a]">充币</button>
        <button type="button" className="h-8 rounded-full bg-[#1a1a1a]">划转</button>
      </div>
    </section>
  );
}

/* ---------- page ---------- */

export default function App() {
  return (
    <div className="flex h-screen flex-col overflow-hidden bg-[#2b2b2b] font-['Roboto','Noto_Sans_CJK_SC',sans-serif]">
      <Header />
      <Ticker />
      <div className="flex h-[45px] shrink-0 items-center justify-between border-b border-black bg-[#351708] pr-2.5 pl-[7px] text-sm text-[#ff6a13]">
        <p>系统维护预告: 2024年10月23日 下午5:10-下午5:20 (UTC+8) 策略交易系统计划维护，策略交易受到影响约 3 分钟。</p>
        <button type="button" aria-label="关闭" className="text-[#8a7468]">
          <Icon box={12} width={1.200} className="h-3 w-3"><path d="m1 1 10 10M11 1 1 11" /></Icon>
        </button>
      </div>
      <nav className="mt-[3px] flex h-8 shrink-0 items-center bg-[#121212] pl-[7px] text-xs text-[#bdbdbd]">
        <span className="mr-4">自选</span>
        {FAVORITES.map((f, i) => (
          <React.Fragment key={f}>
            {i > 0 && <span className="mr-3 ml-4 h-3 w-px bg-[#333]" />}
            <a href="#pair">{f}</a>
          </React.Fragment>
        ))}
        <button type="button" className="ml-[14px] h-6 rounded-full bg-[#1a1a1a] px-2 font-medium text-white">添加自选</button>
      </nav>
      <main className="mt-[3px] flex min-h-0 flex-1 flex-col gap-[3px]">
        <div className="flex shrink-0 gap-[3px]">
          <ChartPanel />
          <OrderBook />
          <TradePanel />
        </div>
        <div className="flex min-h-0 flex-1 gap-[3px]">
          <OrdersPanel />
          <AssetsPanel />
        </div>
      </main>
    </div>
  );
}
